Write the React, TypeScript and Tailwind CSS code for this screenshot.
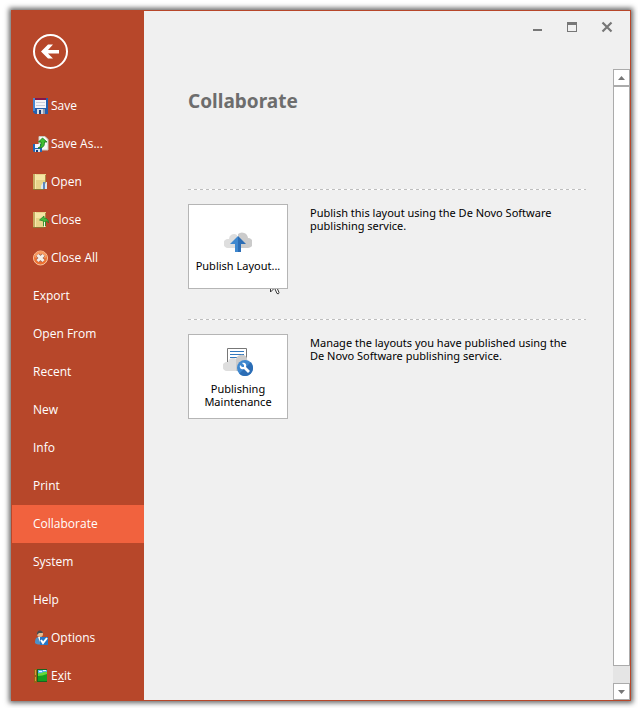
import type { ReactNode } from "react";

function SaveIcon() {
  return (
    <svg width="16" height="16" viewBox="0 0 16 16" aria-hidden="true">
      <path d="M0 0h15v16H2l-2-2z" fill="#245fae" />
      <path d="M0 0h2v13H0z" fill="#4a8ad2" />
      <path d="M2 0h11v2H2z" fill="#86174a" />
      <path d="M2 2h11v8H2z" fill="#f4f4f8" />
      <path d="M3 4.500h9M3 7.500h9" stroke="#c9cedb" />
      <path d="M4 11h8v5H4z" fill="#d7dce4" />
      <path d="M6 12h2v4H6z" fill="#173f7c" />
      <path d="M10 11h2v5h-2z" fill="#8f9bb0" />
    </svg>
  );
}

function SaveAsIcon() {
  return (
    <svg width="16" height="16" viewBox="0 0 16 16" aria-hidden="true">
      <path d="M6 0.500h6l3 3V14H6z" fill="#f7f8f5" stroke="#c9ccc4" />
      <path d="M0 8h9v8H1l-1-1z" fill="#1f67b8" />
      <path d="M2 8h5v4H2z" fill="#f5f5fa" />
      <path d="M2 13h5v3H2z" fill="#dbe3ee" />
      <path d="M3 14h2v2H3z" fill="#153f7c" />
      <path d="M5 12c3-1 3-3 3-6H5.500L9.500 2l4.500 4h-2.500c0 4-1 6-6.500 6z" fill="#3fbf33" stroke="#167315" strokeWidth="0.800" />
    </svg>
  );
}

function FolderIcon({ closing = false }: { closing?: boolean }) {
  return (
    <svg width="16" height="16" viewBox="0 0 16 16" aria-hidden="true">
      <path d="M0 0h13v15H0z" fill="#e8d48a" />
      <path d="M0 0h2v15H0z" fill="#c4ab62" />
      <path d="M2 0h1v15H2z" fill="#f7e9ad" />
      <path d="M3 1h9v5H3z" fill="#f5e6a4" />
      <path d="M12 1h1v13h-1z" fill="#a88d45" />
      <path d="M0 15.500h11" stroke="#8d7434" />
      {closing ? (
        <>
          <path d="M6.500 8 11 4v2c3 0 4.500 2 4.500 5-1-2-2-2-3-2v5h-2V9z" fill="#45b93c" stroke="#1c7f24" strokeWidth="0.700" />
          <path d="M11 10v5h1v-5z" fill="#f4fbe9" />
        </>
      ) : (
        <>
          <path d="M9 10l1-1v6H8v-3z" fill="#dce6ee" />
          <path d="M10 8h2v7h-2z" fill="#5d87bd" />
          <path d="M13 8h1v7h-2v-5z" fill="#dce6ee" />
        </>
      )}
    </svg>
  );
}

function CloseAllIcon() {
  return (
    <svg width="16" height="16" viewBox="0 0 16 16" aria-hidden="true">
      <circle cx="7.500" cy="8" r="7" fill="#ef7131" stroke="#f9c5a2" />
      <path d="M1.500 7a6 6 0 0 1 12 0c-3 2-8 2-12 0z" fill="#f99a61" />
      <path d="M4.500 5l6 6M10.500 5l-6 6" stroke="#a8604c" strokeWidth="4.500" />
      <path d="M4.500 5l6 6M10.500 5l-6 6" stroke="#f2eeea" strokeWidth="3" />
    </svg>
  );
}

function OptionsIcon() {
  return (
    <svg width="16" height="16" viewBox="0 0 16 16" aria-hidden="true">
      <path d="M2 13c0-4 1-6 4-6s5 2 5 6c-2 2-7 2-9 0z" fill="#4d91c9" />
      <path d="M5 7h3l-1 5z" fill="#f6f6f6" />
      <circle cx="7" cy="4" r="3" fill="#e7b98c" />
      <path d="M4 5c-1-6 6-5 6-2L6 3z" fill="#484b50" />
      <path d="M7 7h8v8H7z" fill="#2676c8" />
      <path d="M8 10l2 3 4-5" fill="none" stroke="#fff" strokeWidth="2" />
    </svg>
  );
}

function ExitIcon() {
  return (
    <svg width="16" height="16" viewBox="0 0 16 16" aria-hidden="true">
      <path d="M1 1h13v13H1z" fill="#18651f" />
      <path d="M5 2h9v5H5z" fill="#53b5ee" />
      <path d="M5 5c4 1 5-2 9-1v9H5z" fill="#63d838" />
      <path d="M5 8c3 0 6-1 9-2v7H5z" fill="#159e20" />
      <path d="M6 3.500h3M10 2.500h3" stroke="#e8f7ff" />
      <path d="M1 1h3v14H1z" fill="#9a6117" />
      <path d="M2 2h1v5H2zM2 9h1v4H2z" fill="#d49a3c" />
    </svg>
  );
}

function CloudUploadIcon() {
  return (
    <svg width="28" height="22" viewBox="0 0 28 22" aria-hidden="true">
      <path d="M4 17a4.500 4.500 0 0 1 0-9h1a5 5 0 0 1 8-4l3 13z" fill="#dedede" />
      <path d="M14 17V3a6 6 0 0 1 10 4 5 5 0 0 1 0 10z" fill="#cbcbcb" />
      <path d="M14 5l-8 8h5v8h3z" fill="#3f88cf" />
      <path d="M14 5l8 8h-5v8h-3z" fill="#2c6db5" />
    </svg>
  );
}

function MaintenanceIcon() {
  return (
    <svg width="30" height="29" viewBox="0 0 30 29" aria-hidden="true">
      <path d="M4.500 1.500h19V20h-19z" fill="#fff" stroke="#777" />
      <path d="M7 4.500h14M7 7.500h14M7 10.500h14" stroke="#3278bd" />
      <path d="M4 24a4.500 4.500 0 0 1 0-9h1a5 5 0 0 1 8-3l4 12z" fill="#dedede" />
      <path d="M13 24V12a6 6 0 0 1 11-1l1 13z" fill="#cbcbcb" />
      <circle cx="22" cy="21" r="8" fill="#3f88cf" />
      <path d="M16.300 26.700A8 8 0 0 0 27.700 15.300z" fill="#2c6db5" />
      <path d="M19 16l2 2v2h-2l-2-2c-1 3 1 5 4 4l4 4 2-2-4-4c1-3-1-5-4-4z" fill="#fff" />
    </svg>
  );
}

type Item = { label: string; icon?: ReactNode; active?: boolean };

const items: Item[] = [
  { label: "Save", icon: <SaveIcon /> },
  { label: "Save As...", icon: <SaveAsIcon /> },
  { label: "Open", icon: <FolderIcon /> },
  { label: "Close", icon: <FolderIcon closing /> },
  { label: "Close All", icon: <CloseAllIcon /> },
  { label: "Export" },
  { label: "Open From" },
  { label: "Recent" },
  { label: "New" },
  { label: "Info" },
  { label: "Print" },
  { label: "Collaborate", active: true },
  { label: "System" },
  { label: "Help" },
  { label: "Options", icon: <OptionsIcon /> },
  { label: "Exit", icon: <ExitIcon /> },
];

function Sidebar() {
  return (
    <nav className="w-33 shrink-0 bg-[#b7472a] font-['Open_Sans','Segoe_UI',sans-serif] text-white">
      <button type="button" aria-label="Back" className="mt-[22px] mb-[17px] ml-5 block">
        <svg width="37" height="37" viewBox="0 0 37 37" aria-hidden="true">
          <circle cx="18.500" cy="18.500" r="16.500" strokeWidth="2" fill="none" stroke="#fff" />
          <path d="M9 18.500 16 11.500h5L16 17h11v3.500H16l5 5h-5z" fill="#fff" />
        </svg>
      </button>
      {items.map(({ label, icon, active }) => (
        <button
          key={label}
          type="button"
          aria-current={active ? "page" : undefined}
          className={`flex h-[38px] w-full items-center gap-0.5 pl-[21px] text-left text-xs ${active ? "bg-[#f1623e]" : ""}`}
        >
          {icon}
          <span>
            {label === "Exit" ? (
              <>
                E<span className="underline underline-offset-1">x</span>it
              </>
            ) : (
              label
            )}
          </span>
        </button>
      ))}
    </nav>
  );
}

function WindowControls() {
  return (
    <div className="flex justify-end gap-[23px] pt-2.5 pr-[17px]">
      <button type="button" aria-label="Minimize">
        <svg width="12" height="12" viewBox="0 0 12 12"><path d="M2 8h9v2H2z" fill="#777" /></svg>
      </button>
      <button type="button" aria-label="Maximize">
        <svg width="12" height="12" viewBox="0 0 12 12"><path d="M1 1h10v10H1zM2 4v6h8V4z" fill="#777" fillRule="evenodd" /></svg>
      </button>
      <button type="button" aria-label="Close window">
        <svg width="12" height="12" viewBox="0 0 12 12"><path d="M1.500 1.500l9 9M10.500 1.500l-9 9" stroke="#777" strokeWidth="2.200" /></svg>
      </button>
    </div>
  );
}

function Action({ label, icon, children }: { label: string; icon: ReactNode; children: ReactNode }) {
  return (
    <section className="h-[130px]">
      <div className="h-px bg-[repeating-linear-gradient(90deg,#bebebe_0_3px,#fff_3px_6px)]" />
      <div className="flex gap-[22px] pt-3.5">
        <button
          type="button"
          className="flex h-[85px] w-25 shrink-0 flex-col items-center justify-end gap-1.5 border border-[#b5b5b5] bg-white pb-2.5 text-[11px] leading-[13px]"
        >
          {icon}
          <span className={label.includes("...") ? "pb-1.5" : ""}>{label}</span>
        </button>
        <p className="max-w-[264px] pt-0.5 text-[11px] leading-[13px]">{children}</p>
      </div>
    </section>
  );
}

function ScrollBar() {
  return (
    <div className="mt-[58px] flex w-[17px] shrink-0 flex-col bg-[#e5e5e5]">
      <button type="button" aria-label="Scroll up" className="flex h-[17px] items-center justify-center border border-[#ababab] bg-white">
        <svg width="7" height="4" viewBox="0 0 7 4"><path d="M0 4l3.500-4L7 4z" fill="#777" /></svg>
      </button>
      <div className="mb-[17px] flex-1 border border-[#ababab] bg-white" />
      <button type="button" aria-label="Scroll down" className="flex h-[17px] items-center justify-center border border-[#ababab] bg-white">
        <svg width="7" height="4" viewBox="0 0 7 4"><path d="M0 0h7L3.500 4z" fill="#777" /></svg>
      </button>
    </div>
  );
}

export default function App() {
  return (
    <div className="min-h-screen bg-white pt-2.5 pr-[7px] pb-[7px] pl-[11px] font-['Noto_Sans','Segoe_UI',sans-serif] text-black">
      <div className="flex min-h-[691px] border border-[#b7472a] bg-[#f0f0f0] shadow-[0_0_5px_2px_#666]">
        <Sidebar />
        <main className="min-w-0 flex-1">
          <div className="-mr-[17px]">
            <WindowControls />
          </div>
          <div className="pr-[27px] pl-11">
            <h1 className="mt-[54px] mb-[74px] text-[19px] leading-7 font-bold text-[#6d6d6d]">Collaborate</h1>
            <div className="relative">
              <Action label="Publish Layout..." icon={<CloudUploadIcon />}>
                Publish this layout using the De Novo Software publishing service.
              </Action>
              <svg className="absolute top-25 left-20" width="14" height="8" viewBox="0 0 14 8" aria-hidden="true">
                <path d="M2.500 0v3l3-3M7 0l2 4.500q2 1 2-1L9.500 0" fill="#fff" stroke="#333" />
              </svg>
            </div>
            <Action label="Publishing Maintenance" icon={<MaintenanceIcon />}>
              Manage the layouts you have published using the De Novo Software publishing service.
            </Action>
          </div>
        </main>
        <ScrollBar />
      </div>
    </div>
  );
}
